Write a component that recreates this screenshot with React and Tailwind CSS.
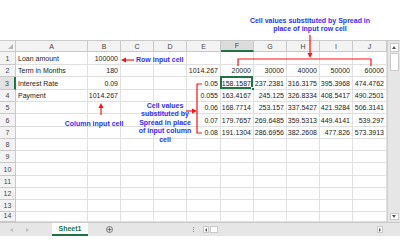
import React from "react";

const COLS = ["A", "B", "C", "D", "E", "F", "G", "H", "I", "J"];
const DATA = [
  ["Loan amount", "100000", "", "", "", "", "", "", "", ""],
  ["Term in Months", "180", "", "", "1014.267", "20000", "30000", "40000", "50000", "60000"],
  ["Interest Rate", "0.09", "", "", "0.05", "158.1587", "237.2381", "316.3175", "395.3968", "474.4762"],
  ["Payment", "1014.267", "", "", "0.055", "163.4167", "245.125", "326.8334", "408.5417", "490.2501"],
  ["", "", "", "", "0.06", "168.7714", "253.157", "337.5427", "421.9284", "506.3141"],
  ["", "", "", "", "0.07", "179.7657", "269.6485", "359.5313", "449.4141", "539.297"],
  ["", "", "", "", "0.08", "191.1304", "286.6956", "382.2608", "477.826", "573.3913"],
];

function Grid() {
  const cells = [];
  cells.push(
    <div key="corner" className="relative bg-[#f3f3f3] border-r border-b border-[#c9c9c9]">
      <div className="absolute right-[2px] bottom-[2px] w-0 h-0 border-l-[5px] border-l-transparent border-b-[5px] border-b-[#b5b5b5]" />
    </div>
  );
  COLS.forEach((c) => {
    const sel = c === "F";
    cells.push(
      <div
        key={"h" + c}
        className={
          sel
            ? "flex items-center justify-center bg-[#dcdcdc] border-r border-[#c9c9c9] border-b-2 border-b-[#217346] text-[7px] leading-none text-[#444]"
            : "flex items-center justify-center bg-[#f3f3f3] border-r border-b border-[#c9c9c9] text-[7px] leading-none text-[#444]"
        }
      >
        {c}
      </div>
    );
  });
  for (let r = 1; r <= 14; r++) {
    const sel = r === 3;
    cells.push(
      <div
        key={"r" + r}
        className={
          sel
            ? "flex items-end justify-center pb-[2px] bg-[#e2e2e2] border-b border-[#c9c9c9] border-r-2 border-r-[#217346] text-[7px] leading-none text-[#444]"
            : "flex items-end justify-center pb-[2px] bg-[#f3f3f3] border-r border-b border-[#c9c9c9] text-[7px] leading-none text-[#444]"
        }
      >
        {r}
      </div>
    );
    const row = DATA[r - 1] || [];
    COLS.forEach((c, ci) => {
      const v = row[ci] || "";
      const isSel = r === 3 && c === "F";
      cells.push(
        <div
          key={c + r}
          className={
            "relative flex items-end pb-[2px] border-r border-b border-[#e0e0e0] text-[7px] leading-none text-[#222] whitespace-nowrap " +
            (ci === 0 ? "justify-start pl-[2px]" : "justify-end pr-[2px]")
          }
        >
          {v}
          {isSel && (
            <>
              <div className="absolute -left-[1px] -top-[1px] right-0 bottom-0 border-2 border-[#217346]" />
              <div className="absolute -right-[2px] -bottom-[2px] w-[4px] h-[4px] bg-[#217346] border border-white" />
            </>
          )}
        </div>
      );
    });
  }
  return (
    <div className="grid grid-cols-[16px_72px_33px_33px_33px_34px_33px_33px_33px_33px_34px] grid-rows-[11px_13px_12px_13px_12px_12px_13px_12px_12px_12px_13px_12px_12px_12px_10px] overflow-hidden">
      {cells}
    </div>
  );
}

function VScroll() {
  return (
    <div className="w-[13px] h-full bg-[#e6e6e6] border-l border-[#d0d0d0] flex flex-col items-center pt-[2px] pb-[2px]">
      <div className="w-[9px] h-[9px] bg-white border border-[#c9c9c9] flex items-center justify-center">
        <div className="w-0 h-0 border-l-[2.5px] border-r-[2.5px] border-b-[3px] border-l-transparent border-r-transparent border-b-[#555]" />
      </div>
      <div className="mt-[1px] w-[9px] h-[18px] bg-white border border-[#c9c9c9]" />
      <div className="flex-1" />
      <div className="w-[9px] h-[7px] bg-white border border-[#c9c9c9] flex items-center justify-center">
        <div className="w-0 h-0 border-l-[2.5px] border-r-[2.5px] border-t-[3px] border-l-transparent border-r-transparent border-t-[#555]" />
      </div>
    </div>
  );
}

function TabBar() {
  return (
    <div className="h-[14px] flex bg-[#e6e6e6] border-t border-[#c9c9c9]">
      <div className="w-[200px] flex items-center relative">
        <div className="ml-[10px] w-0 h-0 border-t-[2.5px] border-b-[2.5px] border-r-[3px] border-t-transparent border-b-transparent border-r-[#bdbdbd]" />
        <div className="ml-[13px] w-0 h-0 border-t-[2.5px] border-b-[2.5px] border-l-[3px] border-t-transparent border-b-transparent border-l-[#bdbdbd]" />
        <div className="ml-[23px] w-[36px] h-full bg-white border-b-2 border-[#217346] flex items-center justify-center text-[7px] font-bold text-[#217346] leading-none">
          Sheet1
        </div>
        <div className="ml-[18px] w-[7px] h-[7px] rounded-full border border-[#777] flex items-center justify-center">
          <svg width="5" height="5" viewBox="0 0 5 5">
            <path d="M2.5 0.5V4.5M0.5 2.5H4.5" stroke="#666" strokeWidth="0.9" />
          </svg>
        </div>
        <div className="absolute left-[193px] top-[4px] flex flex-col gap-[1px]">
          <div className="w-[1px] h-[1px] bg-[#888]" />
          <div className="w-[1px] h-[1px] bg-[#888]" />
          <div className="w-[1px] h-[1px] bg-[#888]" />
        </div>
      </div>
      <div className="w-[187px] flex items-center px-[3px]">
        <div className="w-[6px] h-[7px] bg-white border border-[#c9c9c9] flex items-center justify-center">
          <div className="w-0 h-0 border-t-[2px] border-b-[2px] border-r-[2.5px] border-t-transparent border-b-transparent border-r-[#555]" />
        </div>
        <div className="ml-[1px] w-[8px] h-[7px] bg-white border border-[#c9c9c9]" />
        <div className="flex-1" />
        <div className="w-[6px] h-[7px] bg-white border border-[#c9c9c9] flex items-center justify-center mr-[1px]">
          <div className="w-0 h-0 border-t-[2px] border-b-[2px] border-l-[2.5px] border-t-transparent border-b-transparent border-l-[#555]" />
        </div>
      </div>
      <div className="w-[13px] bg-[#e6e6e6]" />
    </div>
  );
}

export default function App() {
  return (
    <div className="relative w-[400px] h-[250px] bg-white overflow-hidden font-['Liberation_Sans',Arial,sans-serif]">
      <div className="h-[41px] border-b border-[#c9c9c9]" />
      <div className="flex h-[181px]">
        <div className="w-[387px] h-full overflow-hidden">
          <Grid />
        </div>
        <VScroll />
      </div>
      <TabBar />

      <div className="absolute left-[235px] top-[17px] w-[150px] text-center text-[7px] leading-[8px] font-bold text-[#3030ff]">
        Cell values substituted by Spread in
        <br />
        place of input row cell
      </div>
      <div className="absolute left-[136px] top-[56px] text-[7px] leading-[8px] font-bold text-[#3030ff] whitespace-nowrap">
        Row input cell
      </div>
      <div className="absolute left-[63px] top-[120px] w-[62px] text-center text-[7px] leading-[8px] font-bold text-[#3030ff] whitespace-nowrap">
        Column input cell
      </div>
      <div className="absolute left-[133px] top-[102px] w-[64px] text-center text-[7px] leading-[8.4px] font-bold text-[#3030ff]">
        Cell values
        <br />
        substituted by
        <br />
        Spread in place
        <br />
        of input column
        <br />
        cell
      </div>
      <svg className="absolute inset-0 pointer-events-none" width="400" height="250" viewBox="0 0 400 250">
        <g stroke="#ff1010" strokeWidth="1.2" fill="none">
          <line x1="310" y1="35" x2="310" y2="54" />
          <polyline points="238,66 238,59 371,59 371,66" />
          <line x1="126" y1="60" x2="134" y2="60" />
          <line x1="101" y1="115" x2="101" y2="108" />
          <line x1="186" y1="111" x2="192" y2="111" />
          <polyline points="202,84 197,84 197,133 202,133" />
        </g>
        <g fill="#ff1010">
          <polygon points="307.5,53 312.5,53 310,58" />
          <polygon points="121,60 126,57.5 126,62.5" />
          <polygon points="101,103 98.5,108 103.5,108" />
          <polygon points="197,111 192,108.5 192,113.5" />
        </g>
      </svg>
    </div>
  );
}
